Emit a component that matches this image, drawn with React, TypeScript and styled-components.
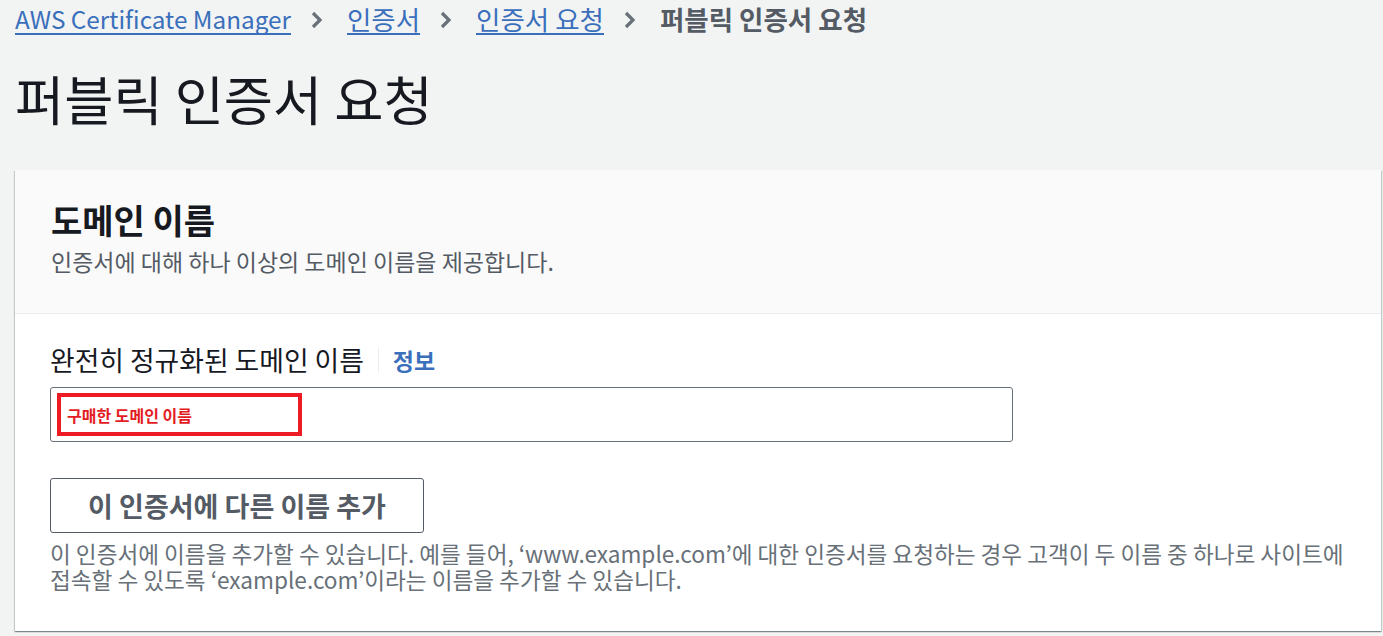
import styled, { createGlobalStyle } from 'styled-components';

const GlobalStyle = createGlobalStyle`
  html, body {
    margin: 0;
    padding: 0;
    background: #f2f3f3;
    font-family: 'Noto Sans CJK KR', 'Noto Sans', sans-serif;
    color: #16191f;
  }
`;

const crumbs = [
  { text: 'AWS Certificate Manager', latin: true },
  { text: '인증서', latin: false },
  { text: '인증서 요청', latin: false },
];

function Chevron() {
  return (
    <svg width='14' height='20' viewBox='0 0 14 20' aria-hidden>
      <path d='M3 3 L10 10 L3 17' fill='none' stroke='#687078' strokeWidth='3.2' />
    </svg>
  );
}

export default function App() {
  return (
    <Page>
      <GlobalStyle />
      <Breadcrumbs>
        {crumbs.map((c) => (
          <Crumb key={c.text}>
            <CrumbLink $latin={c.latin}>{c.text}</CrumbLink>
            <Chevron />
          </Crumb>
        ))}
        <CurrentCrumb>퍼블릭 인증서 요청</CurrentCrumb>
      </Breadcrumbs>

      <Title>퍼블릭 인증서 요청</Title>

      <Card>
        <CardHeader>
          <CardTitle>도메인 이름</CardTitle>
          <CardDescription>인증서에 대해 하나 이상의 도메인 이름을 제공합니다.</CardDescription>
        </CardHeader>
        <CardBody>
          <LabelRow>
            <FieldLabel>완전히 정규화된 도메인 이름</FieldLabel>
            <InfoLink>정보</InfoLink>
          </LabelRow>
          <Input>
            <Highlight>구매한 도메인 이름</Highlight>
          </Input>
          <Button>이 인증서에 다른 이름 추가</Button>
          <Help>
            이 인증서에 이름을 추가할 수 있습니다. 예를 들어, ‘www.example.com’에 대한 인증서를 요청하는 경우 고객이 두 이름 중
            하나로 사이트에 접속할 수 있도록 ‘example.com’이라는 이름을 추가할 수 있습니다.
          </Help>
        </CardBody>
      </Card>
    </Page>
  );
}

const Page = styled.div`
  padding: 0 2px 20px 15px;
`;

const Breadcrumbs = styled.nav`
  display: flex;
  align-items: center;
  height: 34px;
  padding-top: 3px;
  font-size: 26.5px;
`;

const Crumb = styled.div`
  display: flex;
  align-items: center;
  gap: 19px;
  margin-right: 23px;
`;

const CrumbLink = styled.a<{ $latin: boolean }>`
  color: #3a6fbc;
  font-size: ${(p) => (p.$latin ? '24.3px' : '26.5px')};
  line-height: 28px;
  border-bottom: 2px solid #3a6fbc;
  cursor: pointer;
`;

const CurrentCrumb = styled.span`
  color: #545b64;
  font-weight: 700;
  line-height: 28px;
  padding-bottom: 2px;
`;

const Title = styled.h1`
  margin: 0;
  padding: 35px 0 46px;
  font-size: 53.5px;
  font-weight: 400;
  line-height: 52px;
  color: #16191f;
`;

const Card = styled.section`
  background: #fff;
  box-shadow: 0 1px 1px 0 rgba(0, 28, 36, 0.3), 1px 1px 1px 0 rgba(0, 28, 36, 0.15),
    -1px 1px 1px 0 rgba(0, 28, 36, 0.15);
`;

const CardHeader = styled.div`
  background: #fafafa;
  border-bottom: 1px solid #eaeded;
  padding: 30px 36px 38px;
`;

const CardTitle = styled.h2`
  margin: 0;
  font-size: 34px;
  line-height: 40px;
  font-weight: 700;
  color: #16191f;
`;

const CardDescription = styled.p`
  margin: 7px 0 0;
  font-size: 23px;
  line-height: 28px;
  color: #545b64;
`;

const CardBody = styled.div`
  padding: 30px 35px 38px;
  display: flex;
  flex-direction: column;
  align-items: flex-start;
`;

const LabelRow = styled.div`
  display: flex;
  align-items: center;
  height: 32px;
`;

const FieldLabel = styled.label`
  font-size: 26.8px;
  color: #16191f;
  padding-right: 14px;
  border-right: 1px solid #eaeded;
  line-height: 26px;
`;

const InfoLink = styled.a`
  margin-left: 14px;
  font-size: 23px;
  font-weight: 700;
  color: #3a6fbc;
`;

const Input = styled.div`
  margin-top: 11px;
  box-sizing: border-box;
  width: 963px;
  height: 55px;
  border: 1px solid #687078;
  border-radius: 3px;
  background: #fff;
  padding: 5px 6px;
`;

const Highlight = styled.div`
  box-sizing: border-box;
  width: 245px;
  height: 43px;
  border: 4px solid #ed1c24;
  padding-left: 6px;
  display: flex;
  align-items: center;
  font-size: 16px;
  font-weight: 700;
  color: #e31c23;
`;

const Button = styled.button`
  margin-top: 36px;
  box-sizing: border-box;
  width: 374px;
  height: 55px;
  border: 1px solid #545b64;
  border-radius: 3px;
  background: #fff;
  font-family: inherit;
  font-size: 27px;
  font-weight: 700;
  color: #545b64;
  cursor: pointer;
`;

const Help = styled.p`
  margin: 8px 0 0;
  font-size: 22.6px;
  line-height: 26px;
  color: #687078;
  word-break: keep-all;
`;
